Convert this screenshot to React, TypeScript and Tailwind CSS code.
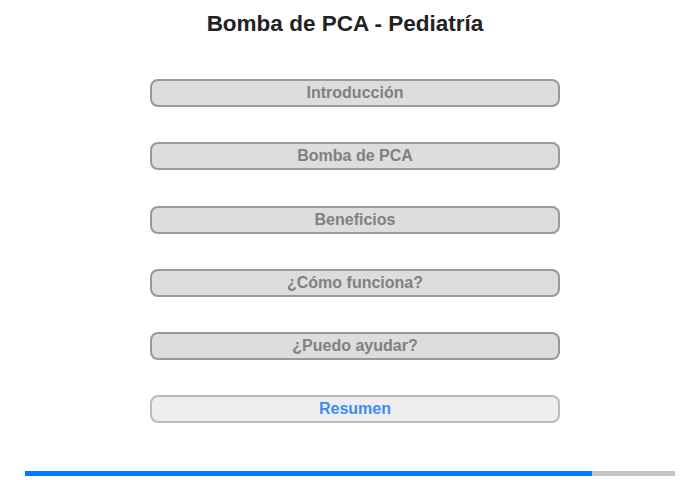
const items = ['Introducción', 'Bomba de PCA', 'Beneficios', '¿Cómo funciona?', '¿Puedo ayudar?']

export default function App() {
  return (
    <div className="w-[700px] h-[480px] bg-white font-['Liberation_Sans',Arial,sans-serif] flex flex-col">
      <h1 className="pt-[11px] pr-[10px] text-center text-[22.5px] leading-[25px] font-bold text-[#222]">
        Bomba de PCA - Pediatría
      </h1>
      <div className="mt-[43px] ml-[150px] w-[410px] flex flex-col gap-[35.3px]">
        {items.map((label) => (
          <button
            key={label}
            className="h-[28px] rounded-[8px] border-2 border-[#999] bg-[#ddd] text-[16px] font-bold text-[#808080] flex items-center justify-center"
          >
            {label}
          </button>
        ))}
        <button className="h-[28px] rounded-[8px] border-2 border-[#bbb] bg-[#eee] text-[16px] font-bold text-[#3b8cf7] flex items-center justify-center">
          Resumen
        </button>
      </div>
      <div className="mt-[48px] ml-[25px] w-[650px] h-[5px] flex bg-[#c4c4c4]">
        <div className="h-full w-[567px] bg-[#007bff]" />
      </div>
    </div>
  )
}
